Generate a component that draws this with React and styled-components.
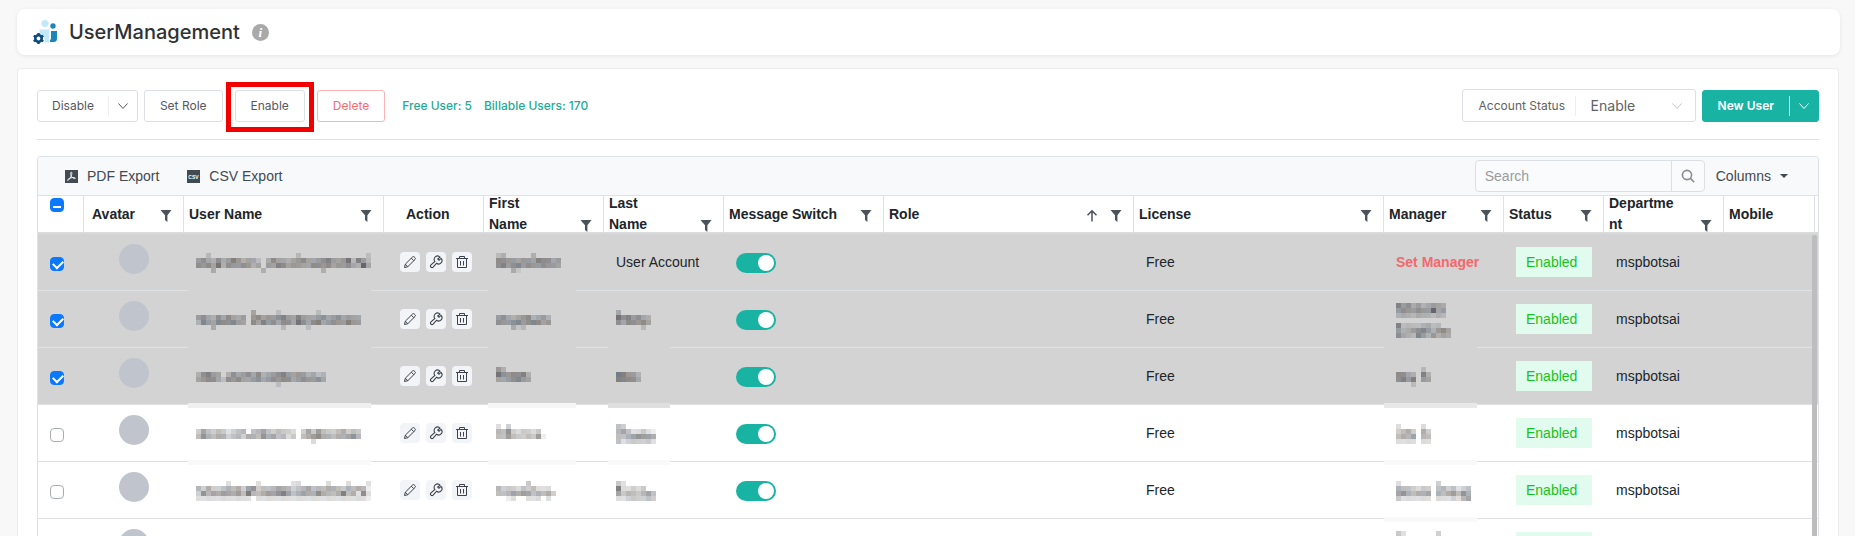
import React, { useState } from 'react';
import styled, { createGlobalStyle } from 'styled-components';

const GlobalStyle = createGlobalStyle`
  * {
    box-sizing: border-box;
  }
  body {
    margin: 0;
    background-color: #f8f8f8;
    font-family: Inter, 'Liberation Sans', sans-serif;
  }
  button, input, select {
    font-family: inherit;
    margin: 0;
  }
`;

const Page = styled.div`
  display: flex;
  flex-direction: column;
  gap: 13px;
  height: 100vh;
  padding: 9px 15px 0 17px;
  overflow: hidden;
`;

const Header = styled.header`
  display: flex;
  flex: none;
  align-items: center;
  height: 46px;
  padding: 0 16px;
  border-radius: 8px;
  background-color: #fff;
  box-shadow: 0 1px 4px rgba(0, 0, 0, 0.08);
  h1 {
    margin: 0 12px 0 11px;
    padding-bottom: 1px;
    font-size: 20px;
    line-height: 28px;
    font-weight: 500;
    color: #303133;
  }
`;

const InfoBadge = styled.span`
  width: 17px;
  height: 17px;
  border-radius: 50%;
  background-color: #a9a9a9;
  color: #fff;
  font: italic bold 13px/17px 'Liberation Serif', serif;
  text-align: center;
`;

const Panel = styled.main`
  display: flex;
  flex: 1;
  flex-direction: column;
  min-height: 0;
  margin-right: 1px;
  padding: 20px 19px 0 19px;
  border: 1px solid #ececec;
  border-bottom: 0;
  border-radius: 4px 4px 0 0;
  background-color: #fff;
`;

const ActionBar = styled.div`
  display: flex;
  flex: none;
  align-items: center;
  justify-content: space-between;
  height: 51px;
  padding-bottom: 17px;
  border-bottom: 1px solid #dfe1e4;
`;

const Group = styled.div`
  display: flex;
  align-items: center;
  gap: 6px;
`;

const Button = styled.button`
  height: 32px;
  padding: 0 15px;
  border: 1px solid ${(props) => (props.$danger ? '#f9b4b8' : '#dcdfe6')};
  border-radius: 3px;
  background-color: #fff;
  color: ${(props) => (props.$danger ? '#f56c74' : '#55585e')};
  font-size: 12px;
  white-space: nowrap;
  cursor: pointer;
`;

const SplitButton = styled.div`
  display: flex;
  align-items: center;
  height: 32px;
  border: 1px solid ${(props) => (props.$primary ? '#19b3a3' : '#dcdfe6')};
  border-radius: 3px;
  background-color: ${(props) => (props.$primary ? '#19b3a3' : '#fff')};
  color: ${(props) => (props.$primary ? '#fff' : '#55585e')};
  button {
    display: flex;
    align-items: center;
    height: 20px;
    padding: 0 ${(props) => (props.$primary ? 15 : 14)}px;
    border: 0;
    background: none;
    color: inherit;
    font-size: 12px;
    font-weight: ${(props) => (props.$primary ? 600 : 400)};
    cursor: pointer;
  }
  button + button {
    padding: 0 8px;
    border-left: 1px solid ${(props) => (props.$primary ? '#fff' : '#ebeef2')};
  }
`;

const Highlighted = styled.div`
  position: relative;
  margin: 0 6px;
  &::after {
    content: '';
    position: absolute;
    inset: -8px -9px -10px;
    border: 5px solid #f20000;
    pointer-events: none;
  }
`;

const Counts = styled.div`
  display: flex;
  gap: 12px;
  margin-left: 11px;
  color: #1fab95;
  font-size: 12px;
  font-weight: 500;
`;

const StatusFilter = styled.div`
  display: flex;
  align-items: center;
  width: 234px;
  height: 33px;
  padding: 0 12px 0 16px;
  border: 1px solid #dcdfe6;
  border-radius: 3px;
  color: #606266;
  label {
    width: 97px;
    border-right: 1px solid #ebeef2;
    font-size: 12px;
    line-height: 20px;
  }
  select {
    flex: 1;
    padding: 0 0 0 15px;
    border: 0;
    appearance: none;
    background: none;
    color: inherit;
    font-size: 14px;
  }
`;

const Grid = styled.section`
  position: relative;
  flex: 1;
  min-height: 0;
  margin: 16px 0 0;
  border: 1px solid #dee2e6;
  border-bottom: 0;
  border-radius: 4px 4px 0 0;
  overflow: hidden;
  font-family: 'Liberation Sans', Arial, sans-serif;
  color: #212529;
`;

const GridToolbar = styled.div`
  display: flex;
  align-items: center;
  height: 39px;
  padding: 0 30px 0 27px;
  border-bottom: 1px solid #dee2e6;
  background-color: #f8f9fb;
  color: #424a52;
`;

const ToolButton = styled.button`
  display: flex;
  align-items: center;
  gap: 9px;
  margin-right: ${(props) => props.$space || 0}px;
  padding: 0;
  border: 0;
  background: none;
  color: inherit;
  font-size: 14px;
  cursor: pointer;
`;

const SearchBox = styled.div`
  display: flex;
  width: 230px;
  height: 32px;
  margin: 0 11px 0 auto;
  border: 1px solid #dcdfe3;
  border-radius: 4px;
  background-color: #fafbfc;
  input {
    flex: 1;
    min-width: 0;
    padding: 0 9px;
    border: 0;
    background: none;
    font-size: 14px;
    outline: none;
    &::placeholder {
      color: #999ca0;
    }
  }
  button {
    display: flex;
    align-items: center;
    justify-content: center;
    width: 33px;
    padding: 0;
    border: 0;
    border-left: 1px solid #dcdfe3;
    background: none;
    color: #888b8f;
  }
`;

const Table = styled.table`
  width: 100%;
  table-layout: fixed;
  border-collapse: separate;
  border-spacing: 0;
  font-size: 14px;
  line-height: 21px;
`;

const Th = styled.th`
  padding: 0;
  border-bottom: 2px solid #d9dadb;
  border-left: 1px solid #dee2e6;
  text-align: left;
  &:first-child {
    border-left: 0;
  }
`;

const HeadCell = styled.div`
  display: flex;
  align-items: center;
  height: 36px;
  padding: 0 11px 0 ${(props) => props.$indent || 5}px;
  overflow: hidden;
`;

const HeadInner = styled.div`
  display: flex;
  flex: 1;
  align-items: flex-end;
  gap: 12px;
  span {
    flex: 1;
    margin-right: ${(props) => (props.$icons ? 10 : 0)}px;
    word-break: break-word;
  }
  svg {
    flex: none;
    margin-bottom: 3px;
  }
`;

const Row = styled.tr`
  background-color: ${(props) => (props.$selected ? '#d3d3d3' : '#fff')};
  td {
    position: relative;
    height: 57px;
    padding: 0 0 0 13px;
    border-bottom: 1px solid #e0e1e3;
  }
  td:first-child {
    padding-left: 12px;
  }
`;

const Checkbox = styled.input.attrs({ type: 'checkbox' })`
  display: block;
  position: relative;
  width: 14px;
  height: 14px;
  appearance: none;
  border: 1px solid ${(props) => (props.checked || props.$mixed ? '#0a78ff' : '#a9adb2')};
  border-radius: 4px;
  background-color: ${(props) => (props.checked || props.$mixed ? '#0a78ff' : '#fff')};
  margin: ${(props) => (props.$mixed ? '0 0 18px 7px' : '4px 0 0')};
  &::after {
    content: '';
    display: ${(props) => (props.checked || props.$mixed ? 'block' : 'none')};
    position: absolute;
    left: 2px;
    top: ${(props) => (props.$mixed ? 5 : 2)}px;
    width: 8px;
    height: ${(props) => (props.$mixed ? 2 : 5)}px;
    border: solid #fff;
    border-width: ${(props) => (props.$mixed ? '0 0 2px' : '0 0 2px 2px')};
    transform: ${(props) => (props.$mixed ? 'none' : 'rotate(-45deg)')};
  }
`;

const Avatar = styled.div`
  width: 30px;
  height: 30px;
  margin: 0 0 6px 23px;
  border-radius: 50%;
  background-color: #bfc4cd;
`;

const Actions = styled.div`
  display: flex;
  gap: 6px;
  margin-left: 4px;
  button {
    display: flex;
    align-items: center;
    justify-content: center;
    width: 20px;
    height: 20px;
    padding: 0;
    border: 0;
    border-radius: 4px;
    background-color: #f3f4f7;
    color: #3a424b;
    cursor: pointer;
  }
`;

const Toggle = styled.input.attrs({ type: 'checkbox', role: 'switch' })`
  display: block;
  width: 40px;
  height: 20px;
  margin: 2px 0 0;
  padding: 2px;
  appearance: none;
  border-radius: 10px;
  background-color: ${(props) => (props.checked ? '#19b3a3' : '#c8ccd2')};
  &::after {
    content: '';
    display: block;
    width: 16px;
    height: 16px;
    margin-left: ${(props) => (props.checked ? 20 : 0)}px;
    border-radius: 50%;
    background-color: #fff;
  }
`;

const StatusTag = styled.span`
  display: block;
  width: 76px;
  padding: 0 10px;
  background-color: #e2fbef;
  color: #17c21c;
  line-height: 30px;
`;

const ManagerLink = styled.a`
  color: #f5686c;
  font-weight: bold;
  text-decoration: none;
  white-space: nowrap;
`;

/* soft band left over the row border by a masked value */
const Band = styled.i`
  position: absolute;
  left: ${(props) => props.$left}px;
  bottom: -4px;
  z-index: 1;
  width: ${(props) => props.$width}px;
  height: 5px;
  background-color: ${(props) => props.$tone};
`;

const Mask = styled.svg`
  display: block;
  margin-top: ${(props) => props.$gap || 0}px;
`;

const ScrollThumb = styled.div`
  position: absolute;
  top: 78px;
  right: 1px;
  bottom: 0;
  width: 5px;
  border-radius: 3px 3px 0 0;
  background-color: #bdbdbd;
`;

const TINTS = ['#4c4c50', '#5c6672', '#625c56'];

// every digit is one 5px block, a higher digit is a darker block
function Pixels({ rows, gap }) {
  const cols = Math.max(...rows.map((row) => row.length));
  return (
    <Mask
      width={cols * 5}
      height={rows.length * 5}
      $gap={gap}
      shapeRendering='crispEdges'
      aria-hidden='true'
    >
      {rows.map((row, y) =>
        row.split('').map((shade, x) =>
          Number(shade) ? (
            <rect
              key={`${x}-${y}`}
              x={x * 5}
              y={y * 5}
              width='5'
              height='5'
              fill={TINTS[(x * 5 + y * 2 + Number(shade)) % 3]}
              opacity={Number(shade) / 10}
            />
          ) : null
        )
      )}
    </Mask>
  );
}

const Chevron = ({ color = 'currentColor' }) => (
  <svg width='12' height='12' viewBox='0 0 12 12' fill='none' stroke={color}>
    <path d='M1.5 3.5 6 8.5l4.5-5' />
  </svg>
);

const Logo = () => (
  <svg width='25' height='26' viewBox='0 0 25 26'>
    <circle cx='12' cy='4.5' r='3.6' fill='#c3e8fa' />
    <path d='M6.5 10.5h9.8v13h-4.8a6 6 0 0 0-5-8z' fill='#c3e8fa' />
    <circle cx='20' cy='7' r='2.7' fill='#1b87b8' />
    <path d='M18 12h6v7.5a3.5 3.5 0 0 1-3.5 3.5H17v-2.5h1z' fill='#1b87b8' />
    <g stroke='#0c4a7d' fill='none'>
      <circle cx='5.5' cy='19.5' r='3.2' strokeWidth='2.6' fill='#fff' />
      <path
        strokeWidth='2.4'
        d='M5.5 14v2M5.5 23v2M.7 16.8l1.8 1M8.5 21.2l1.8 1M.7 22.2l1.8-1M8.5 17.8l1.8-1'
      />
    </g>
  </svg>
);

const FilterIcon = () => (
  <svg width='12' height='13' viewBox='0 0 12 13' fill='#4a525b'>
    <path d='M.5 1h11L7.4 6.2V13L5 11V6.2z' />
  </svg>
);

const SortIcon = () => (
  <svg width='12' height='13' viewBox='0 0 12 13' fill='none' stroke='#4a525b' strokeWidth='1.5'>
    <path d='M6 12.5V2M1.5 6.2 6 1.7l4.5 4.5' />
  </svg>
);

const PdfIcon = () => (
  <svg width='13' height='13' viewBox='0 0 13 13'>
    <path d='M0 0h13v13H0z' fill='#424a52' />
    <path
      d='M6.2 2.2c1.2 0 .6 2.5-.3 4.3S3.4 10.8 2.6 10.4s1.4-2 3.2-2.5 4.6-.6 4.5.3-2.4.1-3.5-1.3S5.2 2.2 6.2 2.2z'
      fill='none'
      stroke='#fff'
      strokeWidth='.9'
    />
  </svg>
);

const CsvIcon = () => (
  <svg width='13' height='13' viewBox='0 0 13 13'>
    <path d='M0 0h13v13H0z' fill='#424a52' />
    <text
      x='6.5'
      y='8.5'
      fill='#fff'
      fontSize='5'
      fontWeight='bold'
      fontFamily='Liberation Sans, sans-serif'
      textAnchor='middle'
    >
      CSV
    </text>
  </svg>
);

const SearchIcon = () => (
  <svg width='14' height='14' viewBox='0 0 14 14' fill='none' stroke='currentColor' strokeWidth='1.6'>
    <circle cx='6' cy='6' r='4.6' />
    <path d='m9.4 9.4 3.8 3.8' />
  </svg>
);

const PencilIcon = () => (
  <svg width='14' height='14' viewBox='0 0 14 14' fill='none' stroke='currentColor'>
    <path d='M1.5 12.5 2.3 9.2 9.5 2a1.3 1.3 0 0 1 1.8 0l.7.7a1.3 1.3 0 0 1 0 1.8L4.8 11.7zM8.3 3.2l2.5 2.5M2.3 9.2l2.5 2.5' />
  </svg>
);

const WrenchIcon = () => (
  <svg width='14' height='14' viewBox='0 0 14 14' fill='none' stroke='currentColor' strokeWidth='1.1'>
    <path d='M11 2.2A3.3 3.3 0 0 0 5.9 6.5L2 9.9a1.5 1.5 0 0 0 2.1 2.2L7.6 8.2a3.3 3.3 0 0 0 4.5-4.8L10 5.2 8.7 4z' />
  </svg>
);

const TrashIcon = () => (
  <svg width='14' height='14' viewBox='0 0 14 14' fill='none' stroke='currentColor'>
    <path d='M1 3.5h12M4.5 3V1.5h5V3M2.5 3.5v9h9v-9M5.5 6v4.5M8.5 6v4.5' />
  </svg>
);

const COLUMNS = [
  { label: 'Avatar', width: 100, indent: 8, filter: true },
  { label: 'User Name', width: 200, filter: true },
  { label: 'Action', width: 100, indent: 22 },
  { label: 'First Name', width: 120, filter: true },
  { label: 'Last Name', width: 120, filter: true },
  { label: 'Message Switch', width: 160, filter: true },
  { label: 'Role', width: 250, filter: true, sort: true },
  { label: 'License', width: 250, filter: true },
  { label: 'Manager', width: 120, filter: true },
  { label: 'Status', width: 100, filter: true },
  { label: 'Department', width: 120, filter: true },
  { label: 'Mobile' },
];

const USERS = [
  {
    id: 1,
    selected: true,
    user: [
      '00200000000000000000200000000000002',
      '45435347534420364434564445644572642',
      '55648355555340446645444655645454384',
      '00030000000003000000000003000000000',
    ],
    first: ['2300000300000', '6555455466544', '5645745555554', '0003100000000'],
    lastName: 'User Account',
  },
  {
    id: 2,
    selected: true,
    user: [
      '000000000004000020000000200000000',
      '454354643405645466446444564464444',
      '375476574406465546547546745554754',
      '000300000000000002000020000000000',
    ],
    first: ['00000000000', '56434563453', '55567457645', '00031200000'],
    last: ['4000000', '7564543', '5465564', '0000020'],
    manager: [
      ['6453434443', '5554555845', '3332333232'],
      ['62222332200', '53345753564', '54327435343'],
    ],
  },
  {
    id: 3,
    selected: true,
    user: [
      '00000000000000000000000000',
      '35644035445463445654543423',
      '45654255644564555654555464',
      '00000000000000002000000000',
    ],
    first: ['5300000', '7656563', '4455754', '0000000'],
    last: ['00000', '87543', '77654', '00000'],
    manager: [['0000020', '6543063', '5657054', '0002000']],
  },
  {
    id: 4,
    user: [
      '000000000000000000000000000000000',
      '354343234404454343320353643345343',
      '465455344355465544230456755455574',
      '000000000000000000000002000000000',
    ],
    first: ['2030000000', '4463233230', '4464334361', '0000000000'],
    last: ['43000000', '45422321', '44566665', '42333332'],
    manager: [['2000020', '3453053', '4546044', '2222022']],
  },
  {
    id: 5,
    user: [
      '00000020000020000002200000200020002',
      '43533454536634445543445444554354541',
      '36455655648445656764565575445745272',
      '22222222222022222222222222222222221',
    ],
    first: ['000000300000', '433324342220', '444656545453', '001200222020'],
    last: ['32000000', '72232300', '53443454', '22333343'],
    manager: [['200000003000000', '544323304434234', '565455505456465', '322222202223245']],
  },
  {
    id: 6,
    user: ['00000000000000000000', '45543466445435556643', '54655476554654655645', '00000000000000000000'],
    first: ['0000000', '5443544', '5565465', '0000000'],
    last: ['0000000', '5443544', '5565465', '0000000'],
    manager: [['3200000030', '5355444434', '5454545545', '2222222222'], ['433323343', '545455645']],
  },
];

const BANDS = {
  1: ['#d3d3d3', '#d3d3d3', null, null],
  2: ['#d3d3d3', '#d3d3d3', '#d3d3d3', '#d3d3d3'],
  3: ['#efefef', '#f6f6f6', '#dfdfdf', '#e8e8e8'],
  4: ['#f9f9f9', '#f8f8f8', '#f9f9f9', '#f9f9f9'],
  5: [null, null, null, '#f9f9f9'],
  6: [null, null, null, null],
};

function UserRow({ user, selected, onSelect }) {
  const [messages, setMessages] = useState(true);
  const [nameTone, firstTone, lastTone, managerTone] = BANDS[user.id];

  return (
    <Row $selected={selected}>
      <td>
        <Checkbox checked={selected} onChange={onSelect} aria-label={`Select user ${user.id}`} />
      </td>
      <td>
        <Avatar />
      </td>
      <td>
        <Pixels rows={user.user} gap={2} />
        {nameTone && <Band $left={5} $width={183} $tone={nameTone} />}
      </td>
      <td>
        <Actions>
          <button aria-label='Edit'>
            <PencilIcon />
          </button>
          <button aria-label='Settings'>
            <WrenchIcon />
          </button>
          <button aria-label='Remove'>
            <TrashIcon />
          </button>
        </Actions>
      </td>
      <td>
        <Pixels rows={user.first} gap={2} />
        {firstTone && <Band $left={5} $width={88} $tone={firstTone} />}
      </td>
      <td>
        {user.lastName || <Pixels rows={user.last} gap={2} />}
        {lastTone && <Band $left={5} $width={62} $tone={lastTone} />}
      </td>
      <td>
        <Toggle
          checked={messages}
          onChange={() => setMessages(!messages)}
          aria-label={`Messages for user ${user.id}`}
        />
      </td>
      <td />
      <td>Free</td>
      <td>
        {user.manager ? (
          user.manager.map((line, i) => <Pixels key={i} rows={line} gap={i ? 5 : 2} />)
        ) : (
          <ManagerLink href='#manager'>Set Manager</ManagerLink>
        )}
        {managerTone && <Band $left={1} $width={93} $tone={managerTone} />}
      </td>
      <td>
        <StatusTag>Enabled</StatusTag>
      </td>
      <td>mspbotsai</td>
      <td colSpan='2' />
    </Row>
  );
}

function UserGrid() {
  const [selected, setSelected] = useState(
    USERS.filter((user) => user.selected).map((user) => user.id)
  );

  const toggle = (id) => {
    setSelected(
      selected.includes(id) ? selected.filter((item) => item !== id) : [...selected, id]
    );
  };

  return (
    <Grid>
      <GridToolbar>
        <ToolButton $space={28}>
          <PdfIcon />
          PDF Export
        </ToolButton>
        <ToolButton>
          <CsvIcon />
          CSV Export
        </ToolButton>
        <SearchBox>
          <input placeholder='Search' aria-label='Search' />
          <button aria-label='Run search'>
            <SearchIcon />
          </button>
        </SearchBox>
        <ToolButton>
          Columns
          <svg width='8' height='4' viewBox='0 0 8 4' fill='currentColor'>
            <path d='M0 0h8L4 4z' />
          </svg>
        </ToolButton>
      </GridToolbar>
      <Table>
        <colgroup>
          <col width='45' />
          {COLUMNS.map((column) => (
            <col key={column.label} width={column.width} />
          ))}
          <col width='4' />
        </colgroup>
        <thead>
          <tr>
            <Th>
              <HeadCell>
                <Checkbox
                  $mixed
                  checked={false}
                  onChange={() => setSelected([])}
                  aria-label='Select all users'
                />
              </HeadCell>
            </Th>
            {COLUMNS.map((column) => (
              <Th key={column.label}>
                <HeadCell $indent={column.indent}>
                  <HeadInner $icons={column.filter}>
                    <span>{column.label}</span>
                    {column.sort && <SortIcon />}
                    {column.filter && <FilterIcon />}
                  </HeadInner>
                </HeadCell>
              </Th>
            ))}
            <Th aria-hidden='true' />
          </tr>
        </thead>
        <tbody>
          {USERS.map((user) => (
            <UserRow
              key={user.id}
              user={user}
              selected={selected.includes(user.id)}
              onSelect={() => toggle(user.id)}
            />
          ))}
        </tbody>
      </Table>
      <ScrollThumb />
    </Grid>
  );
}

function App() {
  const [status, setStatus] = useState('Enable');

  return (
    <Page>
      <GlobalStyle />
      <Header>
        <Logo />
        <h1>UserManagement</h1>
        <InfoBadge>i</InfoBadge>
      </Header>
      <Panel>
        <ActionBar>
          <Group>
            <SplitButton>
              <button>Disable</button>
              <button aria-label='More disable options'>
                <Chevron />
              </button>
            </SplitButton>
            <Button>Set Role</Button>
            <Highlighted>
              <Button>Enable</Button>
            </Highlighted>
            <Button $danger>Delete</Button>
            <Counts>
              <span>Free User: 5</span>
              <span>Billable Users: 170</span>
            </Counts>
          </Group>
          <Group>
            <StatusFilter>
              <label htmlFor='account-status'>Account Status</label>
              <select
                id='account-status'
                value={status}
                onChange={(e) => setStatus(e.target.value)}
              >
                <option>Enable</option>
                <option>Disable</option>
              </select>
              <Chevron color='#c0c4cc' />
            </StatusFilter>
            <SplitButton $primary>
              <button>New User</button>
              <button aria-label='More ways to add a user'>
                <Chevron />
              </button>
            </SplitButton>
          </Group>
        </ActionBar>
        <UserGrid />
      </Panel>
    </Page>
  );
}

export default App;
